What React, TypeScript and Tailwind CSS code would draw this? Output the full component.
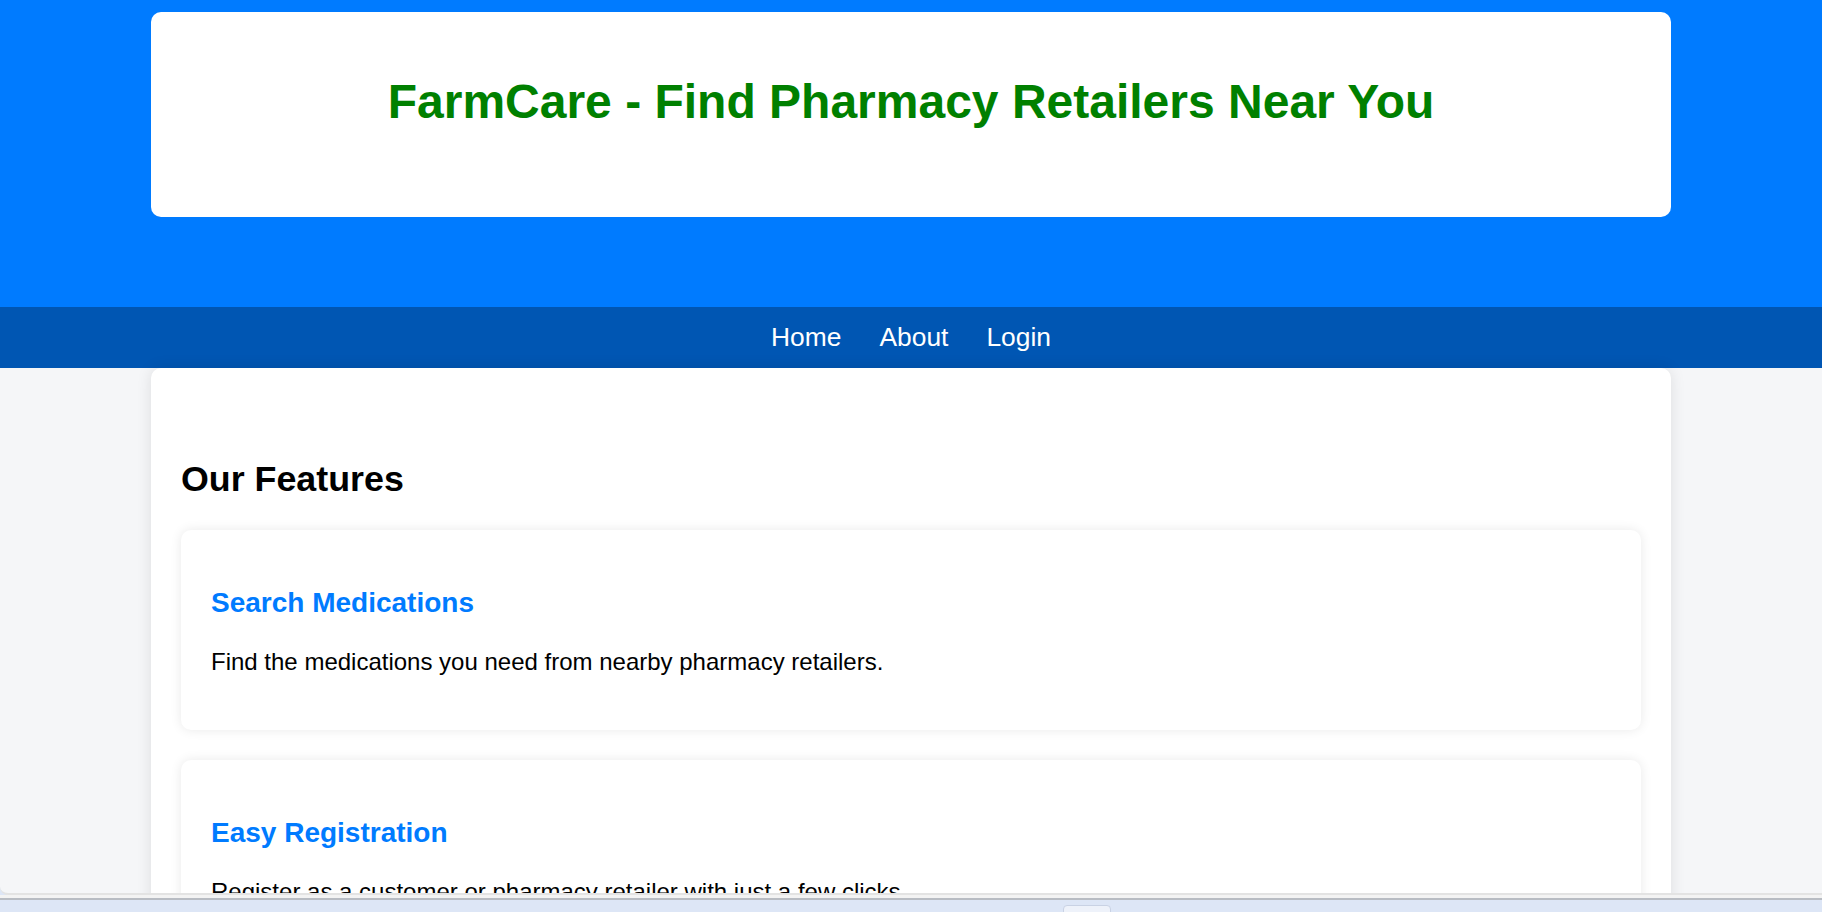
const features = [
  {
    title: "Search Medications",
    text: "Find the medications you need from nearby pharmacy retailers.",
  },
  {
    title: "Easy Registration",
    text: "Register as a customer or pharmacy retailer with just a few clicks.",
  },
  {
    title: "Nearby Retailers",
    text: "See pharmacy retailers close to your location.",
  },
];

const App = () => {
  return (
    <div className="h-[912px] flex flex-col overflow-hidden bg-[#dde6f6] font-['Liberation_Sans',Arial,sans-serif]">
      <div className="h-[895px] shrink-0 overflow-hidden bg-[#f5f6f8] rounded-bl-[8px] border-b-2 border-[#e3e3e3]">
        <header className="bg-[#007bff] h-[307px] pt-[12px]">
          <div className="mx-[151px] h-[205px] bg-white rounded-[10px] pt-[62px] text-center">
            <h1 className="text-[48px] leading-[55px] font-bold text-[#008000]">
              FarmCare - Find Pharmacy Retailers Near You
            </h1>
          </div>
        </header>

        <nav className="bg-[#0056b3] h-[61px] pt-[15px]">
          <ul className="flex justify-center gap-[38px] text-[26.4px] leading-[30px] text-white">
            <li>
              <a href="#home">Home</a>
            </li>
            <li>
              <a href="#about">About</a>
            </li>
            <li>
              <a href="#login">Login</a>
            </li>
          </ul>
        </nav>

        <main className="mx-[151px] bg-white rounded-t-[10px] shadow-[0_0_15px_rgba(0,0,0,0.1)] px-[30px] pt-[91px] pb-[30px]">
          <h2 className="text-[35.8px] leading-[40px] font-bold text-black">Our Features</h2>
          <div className="mt-[31px] flex flex-col gap-[30px]">
            {features.map((f) => (
              <div
                key={f.title}
                className="bg-white rounded-[10px] shadow-[0_0_12px_rgba(0,0,0,0.09)] px-[30px] pt-[57px] pb-[54px]"
              >
                <h3 className="text-[28px] leading-[32px] font-bold text-[#007bff]">{f.title}</h3>
                <p className="mt-[29px] text-[24px] leading-[28px] text-black">{f.text}</p>
              </div>
            ))}
          </div>
        </main>
      </div>
      <div className="h-[3px] shrink-0 bg-[#f3f3f3]" />
      <div className="h-[2px] shrink-0 bg-[#b8bcc3]" />
      <div className="flex-1 flex">
        <div className="ml-[1063px] mt-[5px] w-[48px] h-[10px] rounded-t-[4px] bg-[#eef2fa] border border-[#c9d2e4]" />
      </div>
    </div>
  );
};

export default App;
